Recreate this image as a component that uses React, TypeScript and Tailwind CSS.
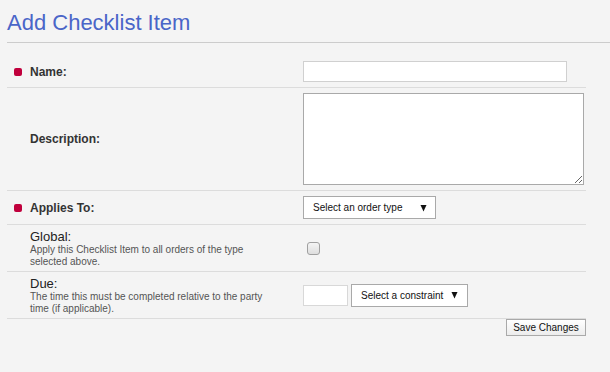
import React from "react";

function Bullet({ show }: { show: boolean }) {
  return (
    <div className={show ? "w-[8px] h-[8px] rounded-[2px] bg-[#c0003c] shrink-0" : "w-[8px] h-[8px] shrink-0"} />
  );
}

function Arrow() {
  return (
    <svg width="7" height="8" viewBox="0 0 7 8" className="shrink-0">
      <path d="M0.5 1 L6.5 1 L3.5 7.5 Z" fill="#111" />
    </svg>
  );
}

function FakeSelect({ text, w, pl, arrowRight }: { text: string; w: string; pl: string; arrowRight: string }) {
  return (
    <div
      className={`${w} h-[23px] bg-white border border-[#a9a9a9] flex items-center justify-between ${pl} ${arrowRight} text-[10px] text-[#111] font-['Liberation_Sans',Arial,sans-serif]`}
    >
      <span>{text}</span>
      <Arrow />
    </div>
  );
}

export default function App() {
  return (
    <div className="min-h-[372px] w-[610px] bg-[#f4f4f4] font-['Liberation_Sans',Arial,sans-serif] text-[#333]">
      <h1 className="ml-[7px] pt-[10px] pb-[7px] text-[22px] leading-[25px] text-[#4a65c8] border-b border-[#cccccc] font-normal">
        Add Checklist Item
      </h1>
      <div className="ml-[7px] w-[579px] mt-[13px]">
        {/* Name */}
        <div className="grid grid-cols-[296px_1fr] items-center py-[5px] border-b border-[#dcdcdc]">
          <div className="flex items-center gap-[8px] pl-[7px]">
            <Bullet show />
            <span className="text-[12px] font-bold">Name:</span>
          </div>
          <div>
            <input className="block w-[264px] h-[21px] bg-white border border-[#d0d0d0] outline-none" />
          </div>
        </div>
        {/* Description */}
        <div className="grid grid-cols-[296px_1fr] items-center py-[5px] border-b border-[#dcdcdc]">
          <div className="flex items-center gap-[8px] pl-[7px]">
            <Bullet show={false} />
            <span className="text-[12px] font-bold">Description:</span>
          </div>
          <div>
            <textarea className="block w-[281px] h-[92px] bg-white border border-[#a9a9a9] outline-none" />
          </div>
        </div>
        {/* Applies To */}
        <div className="grid grid-cols-[296px_1fr] items-center py-[5px] border-b border-[#dcdcdc]">
          <div className="flex items-center gap-[8px] pl-[7px]">
            <Bullet show />
            <span className="text-[12px] font-bold">Applies To:</span>
          </div>
          <div>
            <FakeSelect text="Select an order type" w="w-[133px]" pl="pl-[9px]" arrowRight="pr-[8px]" />
          </div>
        </div>
        {/* Global */}
        <div className="grid grid-cols-[296px_1fr] items-center h-[47px] border-b border-[#dcdcdc]">
          <div className="flex items-start gap-[8px] pl-[7px]">
            <Bullet show={false} />
            <div className="w-[240px]">
              <div className="text-[13px] leading-[15px] text-[#222]">Global:</div>
              <div className="text-[10px] leading-[11.5px] text-[#555]">
                Apply this Checklist Item to all orders of the type selected above.
              </div>
            </div>
          </div>
          <div className="pl-[4px]">
            <div className="w-[13px] h-[13px] rounded-[3px] border border-[#a0a0a0] bg-gradient-to-b from-[#f4f4f4] to-[#dedede]" />
          </div>
        </div>
        {/* Due */}
        <div className="grid grid-cols-[296px_1fr] items-center h-[47px] border-b border-[#dcdcdc]">
          <div className="flex items-start gap-[8px] pl-[7px]">
            <Bullet show={false} />
            <div className="w-[240px]">
              <div className="text-[13px] leading-[15px] text-[#222]">Due:</div>
              <div className="text-[10px] leading-[11.5px] text-[#555]">
                The time this must be completed relative to the party time (if applicable).
              </div>
            </div>
          </div>
          <div className="flex items-center gap-[3px]">
            <input className="block w-[45px] h-[21px] bg-white border border-[#d8d8d8] outline-none" />
            <FakeSelect text="Select a constraint" w="w-[117px]" pl="pl-[9px]" arrowRight="pr-[9px]" />
          </div>
        </div>
        {/* Save */}
        <div className="flex justify-end">
          <button className="w-[80px] h-[17px] flex items-center justify-center border border-[#a9a9a9] bg-gradient-to-b from-[#ffffff] to-[#ececec] text-[10px] text-[#111] leading-none">
            Save Changes
          </button>
        </div>
      </div>
    </div>
  );
}
